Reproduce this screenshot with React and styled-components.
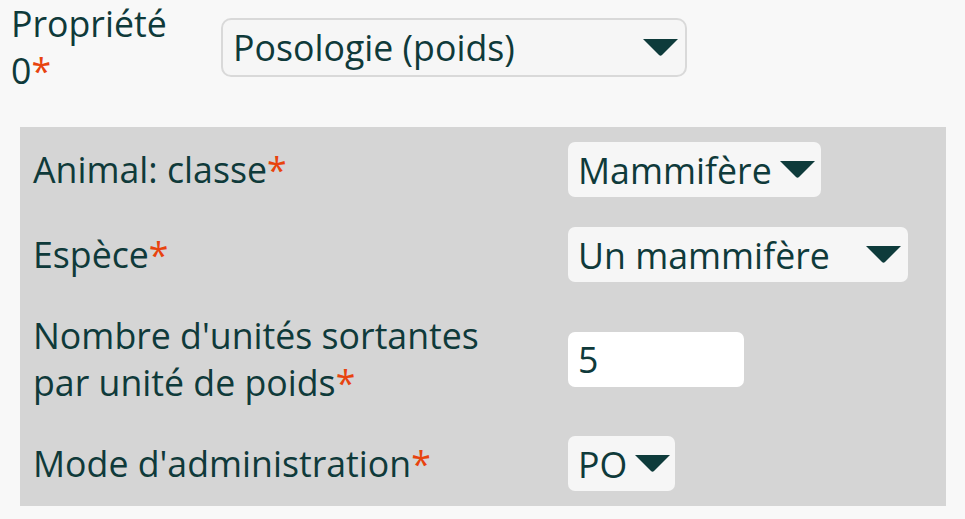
import React from 'react';
import styled, { createGlobalStyle } from 'styled-components';

const GlobalStyle = createGlobalStyle`
  body {
    margin: 0;
    background: #f8f8f8;
    font-family: "Open Sans", "Noto Sans", sans-serif;
    color: #0f3a3a;
  }
`;

const Page = styled.div`
  width: 965px;
  height: 519px;
  overflow: hidden;
  box-sizing: border-box;
`;

const TopRow = styled.div`
  display: flex;
  align-items: center;
  padding: 0 0 0 11px;
`;

const TopLabel = styled.div`
  width: 210px;
  font-size: 35.7px;
  line-height: 47px;
`;

const Required = styled.span`
  color: #e8430e;
`;

const Select = styled.div`
  display: flex;
  align-items: center;
  justify-content: space-between;
  box-sizing: border-box;
  width: ${(p) => p.$width}px;
  height: ${(p) => p.$height || 55}px;
  padding: 0 7px 0 10px;
  background: #f6f6f6;
  border: ${(p) => (p.$bordered ? '2.5px solid #d9d9d9' : 'none')};
  border-radius: ${(p) => (p.$bordered ? 10 : 7)}px;
  font-size: 35.7px;
  color: #0f3a3a;
  white-space: nowrap;
`;

const Arrow = styled.svg`
  flex: none;
  width: 35px;
  height: 17px;
  margin-left: 8px;
`;

const Panel = styled.div`
  margin: 33px 19px 0 20px;
  padding: 15px 13px;
  background: #d5d5d5;
  display: grid;
  grid-template-columns: 535px 1fr;
  row-gap: 30px;
  align-items: center;
`;

const FieldLabel = styled.div`
  font-size: 35.7px;
  line-height: 47px;
`;

const NumberInput = styled.input`
  box-sizing: border-box;
  width: 176px;
  height: 55px;
  border: none;
  border-radius: 7px;
  background: #ffffff;
  padding: 0 10px;
  font-family: inherit;
  font-size: 35.7px;
  color: #0f3a3a;
  outline: none;
`;

const Triangle = () => (
  <Arrow viewBox="0 0 35 17">
    <path d="M0 0 H35 L19 16 Q17.5 17.3 16 16 Z" fill="#0e3b3b" />
  </Arrow>
);

const Dropdown = ({ value, width, bordered, height }) => (
  <Select $width={width} $bordered={bordered} $height={height}>
    <span>{value}</span>
    <Triangle />
  </Select>
);

const fields = [
  { label: 'Animal: classe', kind: 'select', value: 'Mammifère', width: 253 },
  { label: 'Espèce', kind: 'select', value: 'Un mammifère', width: 340 },
  { label: ["Nombre d'unités sortantes", 'par unité de poids'], kind: 'input', value: '5' },
  { label: "Mode d'administration", kind: 'select', value: 'PO', width: 107 },
];

export default function App() {
  return (
    <Page>
      <GlobalStyle />
      <TopRow>
        <TopLabel>
          Propriété
          <br />
          0<Required>*</Required>
        </TopLabel>
        <Dropdown value="Posologie (poids)" width={466} height={59} bordered />
      </TopRow>
      <Panel>
        {fields.map((f, i) => (
          <React.Fragment key={i}>
            <FieldLabel>
              {Array.isArray(f.label) ? (
                <>
                  {f.label[0]}
                  <br />
                  {f.label[1]}
                </>
              ) : (
                f.label
              )}
              <Required>*</Required>
            </FieldLabel>
            <div>
              {f.kind === 'select' ? (
                <Dropdown value={f.value} width={f.width} />
              ) : (
                <NumberInput type="text" value={f.value} readOnly />
              )}
            </div>
          </React.Fragment>
        ))}
      </Panel>
    </Page>
  );
}
